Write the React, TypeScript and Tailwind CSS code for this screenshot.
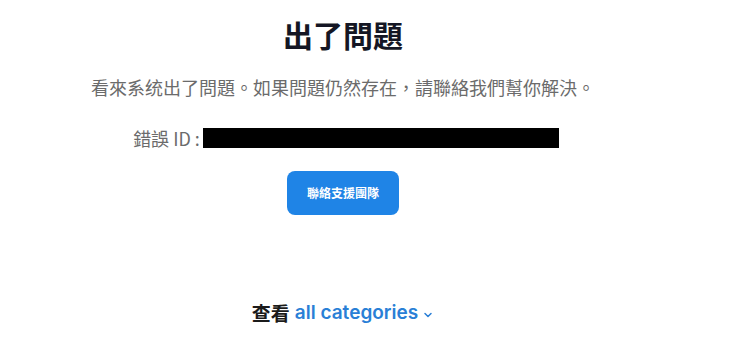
export default function App() {
  return (
    <div className="min-h-[347px] w-full bg-white">
      <div
        className="flex w-[686px] flex-col items-center pt-[15px]"
        style={{ fontFamily: '"Noto Sans CJK TC", "Noto Sans", sans-serif' }}
      >
        <h1 className="text-[30px] font-bold leading-[38px] text-[#141624]">出了問題</h1>

        <p className="mt-[22px] text-[18px] leading-[24px] text-[#6b6b6b]">
          看來系统出了問題。如果問題仍然存在，請聯絡我們幫你解決。
        </p>

        <div className="mt-[27px] flex items-center pl-[6px] text-[18px] leading-[24px] text-[#6b6b6b]">
          <span>錯誤 ID :</span>
          <span className="ml-[3px] inline-block h-[20px] w-[356px] bg-black" />
        </div>

        <button className="mt-[21px] h-[44px] w-[112px] rounded-lg bg-[#1f84e6] text-[12px] font-bold text-white">
          聯絡支援團隊
        </button>

        <div className="mt-[86px] flex items-center text-[19px] font-semibold leading-[24px]">
          <span className="text-[#1b1b1b]">查看</span>
          <span
            className="ml-[5px] text-[#2a7fd6]"
            style={{ fontFamily: 'Inter, "Noto Sans", sans-serif' }}
          >
            all categories
          </span>
          <svg className="ml-[4px] mt-[3px] h-[12px] w-[12px]" viewBox="0 0 24 24" fill="none" stroke="#2a7fd6" strokeWidth="3" strokeLinecap="round" strokeLinejoin="round">
            <path d="M6 9l6 6 6-6" />
          </svg>
        </div>
      </div>
    </div>
  );
}
